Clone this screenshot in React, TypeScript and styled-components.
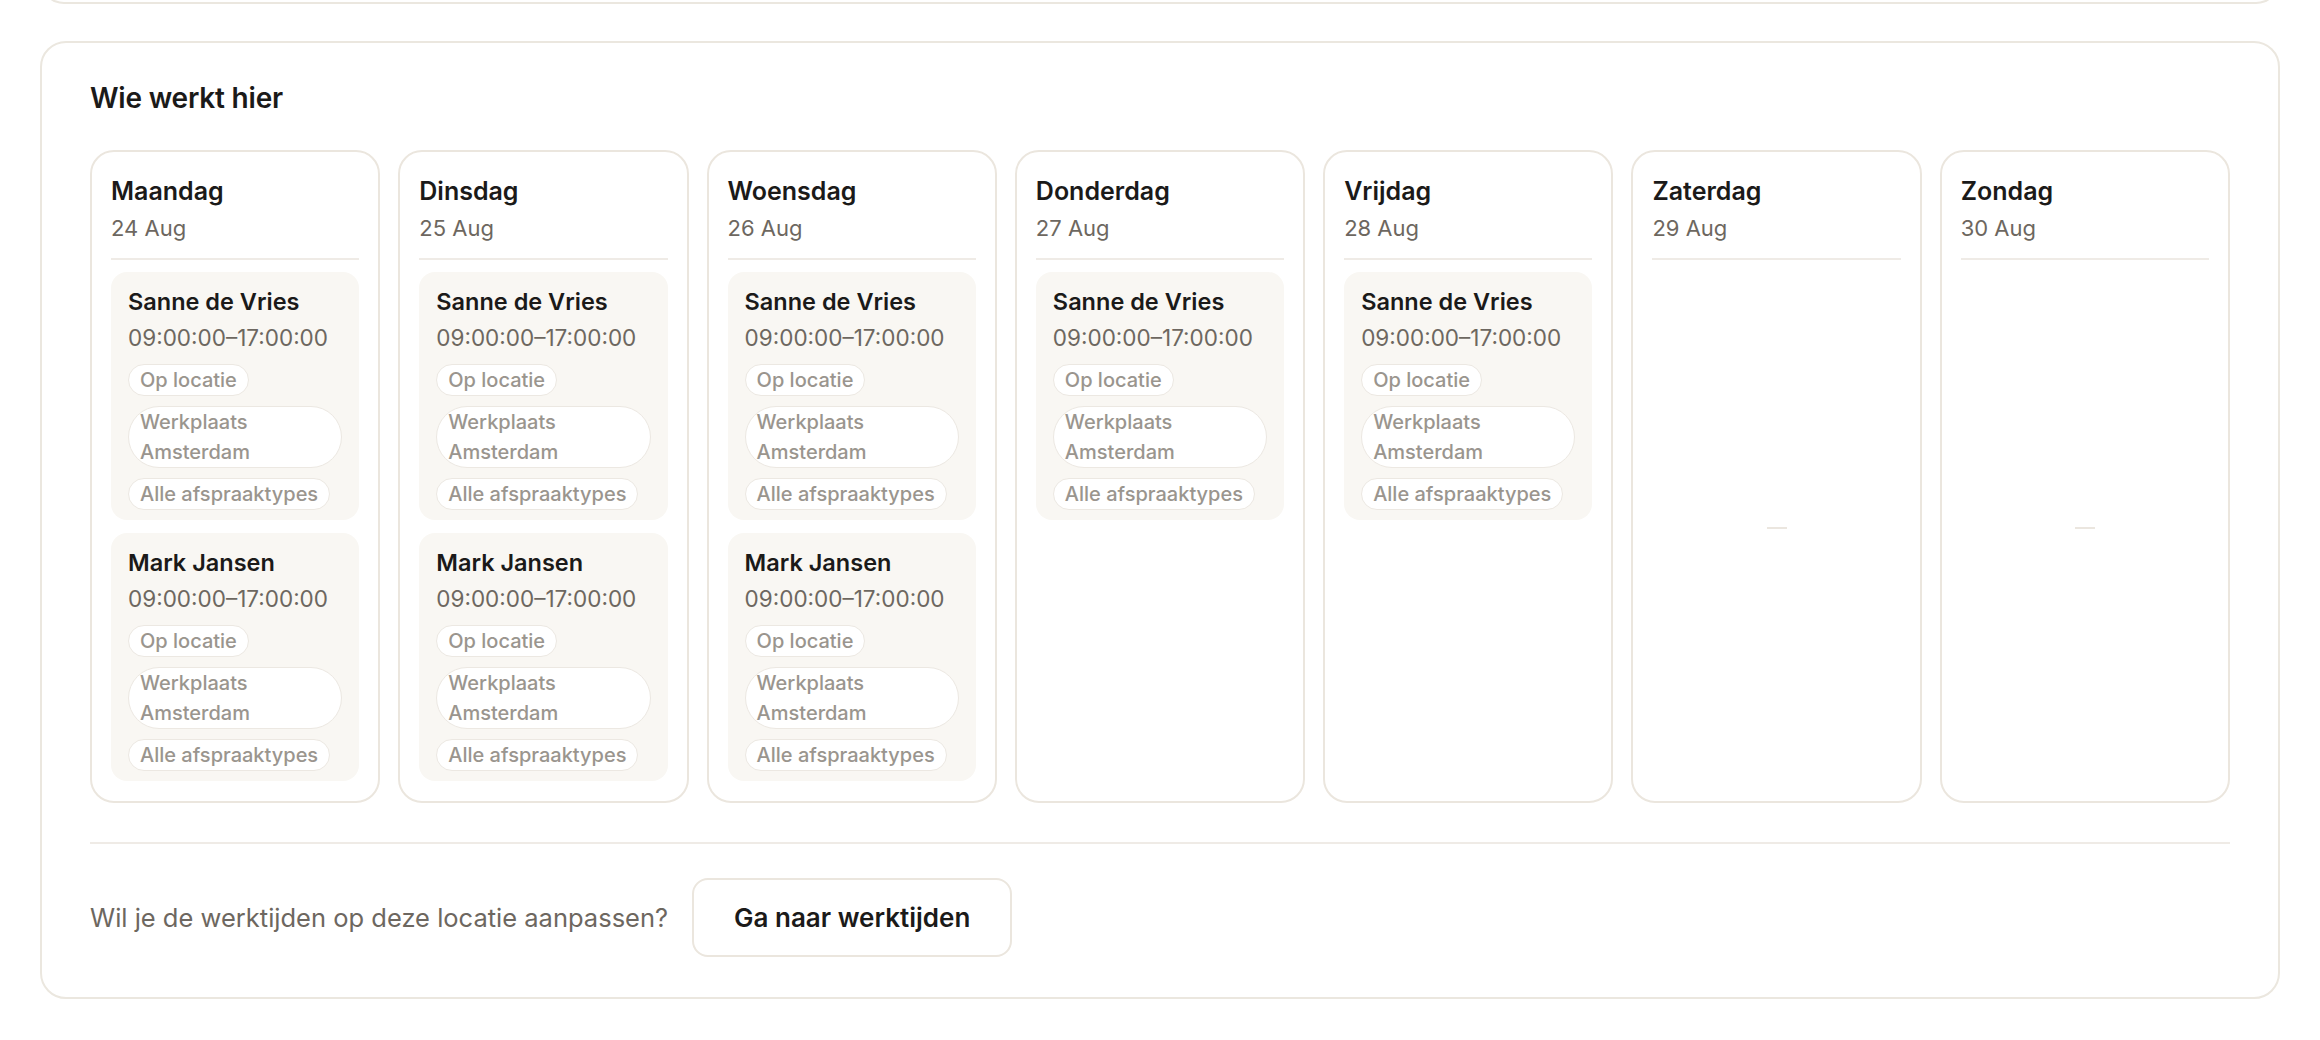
import React from 'react';
import styled, { createGlobalStyle } from 'styled-components';

const GlobalStyle = createGlobalStyle`
  * { box-sizing: border-box; }
  body {
    margin: 0;
    background: #ffffff;
    font-family: Inter, "Noto Sans", "Liberation Sans", sans-serif;
    color: #1b1a19;
  }
`;

const Page = styled.div`
  padding: 0 40px 40px;
`;

/* bottom edge of the section above, scrolled mostly out of view */
const PrevSection = styled.div`
  height: 24px;
  margin-top: -20px;
  border: 2px solid #ebe7df;
  border-top: none;
  border-radius: 0 0 24px 24px;
`;

const Section = styled.section`
  margin-top: 37px;
  border: 2px solid #ebe7df;
  border-radius: 26px;
  padding: 36px 48px 40px;
`;

const Title = styled.h2`
  margin: 0 0 33px;
  font-size: 28px;
  line-height: 38px;
  font-weight: 600;
  letter-spacing: -0.2px;
`;

const WeekGrid = styled.div`
  display: grid;
  grid-template-columns: repeat(7, 1fr);
  gap: 18px;
`;

const DayCard = styled.div`
  display: flex;
  flex-direction: column;
  border: 2px solid #ebe6de;
  border-radius: 24px;
  padding: 23px 19px 20px;
  min-height: 653px;
`;

const DayHeader = styled.div`
  padding-bottom: 15px;
  border-bottom: 2px solid #efebe6;
`;

const DayName = styled.div`
  font-size: 25px;
  line-height: 32px;
  font-weight: 600;
  margin-bottom: 6px;
`;

const DayDate = styled.div`
  font-size: 22px;
  line-height: 30px;
  color: #6d6760;
`;

const ShiftList = styled.div`
  display: flex;
  flex-direction: column;
  gap: 13px;
  margin-top: 12px;
`;

const Shift = styled.div`
  background: #f9f7f3;
  border-radius: 16px;
  padding: 15px 17px 10px;
`;

const PersonName = styled.div`
  font-size: 23.5px;
  line-height: 30px;
  font-weight: 600;
`;

const Hours = styled.div`
  margin-top: 6px;
  font-size: 22.5px;
  line-height: 30px;
  color: #6d6760;
`;

const Tags = styled.div`
  display: flex;
  flex-direction: column;
  align-items: flex-start;
  gap: 10px;
  margin-top: 11px;
`;

const Tag = styled.span`
  background: #ffffff;
  border: 1px solid #ece8e2;
  border-radius: 999px;
  padding: 0 11px;
  font-size: 20px;
  line-height: 30px;
  font-weight: 500;
  color: #9a958e;
`;

const Empty = styled.div`
  flex: 1;
  display: flex;
  align-items: center;
  justify-content: center;
  padding-top: 14px;
`;

const EmptyDash = styled.span`
  width: 20px;
  height: 2px;
  background: #ebe6df;
`;

const Divider = styled.hr`
  margin: 39px 0 0;
  border: none;
  border-top: 2px solid #efebe6;
`;

const Footer = styled.div`
  display: flex;
  align-items: center;
  gap: 24px;
  margin-top: 34px;
`;

const FooterText = styled.span`
  font-size: 25.5px;
  color: #6d6760;
`;

const Button = styled.button`
  font-family: inherit;
  background: #ffffff;
  border: 2px solid #ebe6de;
  border-radius: 16px;
  height: 79px;
  padding: 0 40px;
  font-size: 26px;
  font-weight: 600;
  color: #1b1a19;
  cursor: pointer;
`;

type Person = { name: string; hours: string };

const staff: Person[] = [
  { name: 'Sanne de Vries', hours: '09:00:00–17:00:00' },
  { name: 'Mark Jansen', hours: '09:00:00–17:00:00' },
];

const days = [
  { name: 'Maandag', date: '24 Aug', people: staff },
  { name: 'Dinsdag', date: '25 Aug', people: staff },
  { name: 'Woensdag', date: '26 Aug', people: staff },
  { name: 'Donderdag', date: '27 Aug', people: staff.slice(0, 1) },
  { name: 'Vrijdag', date: '28 Aug', people: staff.slice(0, 1) },
  { name: 'Zaterdag', date: '29 Aug', people: [] },
  { name: 'Zondag', date: '30 Aug', people: [] },
];

const tags = ['Op locatie', 'Werkplaats Amsterdam', 'Alle afspraaktypes'];

const App = (): JSX.Element => (
  <Page>
    <GlobalStyle />
    <PrevSection />
    <Section>
      <Title>Wie werkt hier</Title>
      <WeekGrid>
        {days.map((day) => (
          <DayCard key={day.name}>
            <DayHeader>
              <DayName>{day.name}</DayName>
              <DayDate>{day.date}</DayDate>
            </DayHeader>
            {day.people.length ? (
              <ShiftList>
                {day.people.map((p) => (
                  <Shift key={p.name}>
                    <PersonName>{p.name}</PersonName>
                    <Hours>{p.hours}</Hours>
                    <Tags>
                      {tags.map((t) => (
                        <Tag key={t}>{t}</Tag>
                      ))}
                    </Tags>
                  </Shift>
                ))}
              </ShiftList>
            ) : (
              <Empty>
                <EmptyDash />
              </Empty>
            )}
          </DayCard>
        ))}
      </WeekGrid>
      <Divider />
      <Footer>
        <FooterText>Wil je de werktijden op deze locatie aanpassen?</FooterText>
        <Button>Ga naar werktijden</Button>
      </Footer>
    </Section>
  </Page>
);

export default App;
